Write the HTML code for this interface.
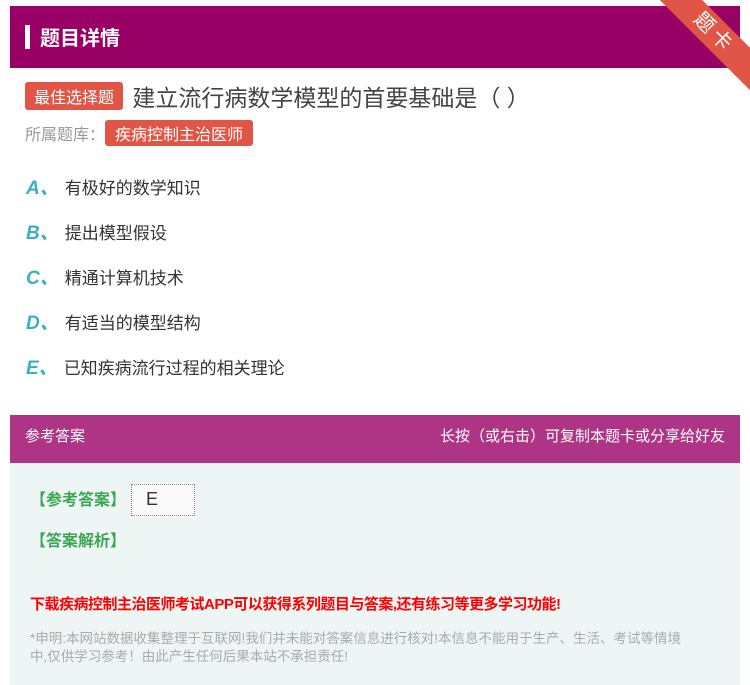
<!DOCTYPE html>
<html><head><meta charset="utf-8"><style>
*{margin:0;padding:0;box-sizing:border-box}
body{width:750px;height:685px;background:#fff;font-family:"Liberation Sans","Noto Sans CJK SC",sans-serif;position:relative;overflow:hidden}
.hd{position:absolute;left:10px;top:6px;width:730px;height:62px;background:#990066}
.hd .bar{position:absolute;left:15px;top:19px;width:5px;height:24px;background:#fff}
.hd .t{position:absolute;left:30px;top:16px;color:#fff;font-size:20px;font-weight:bold}
.rib{position:absolute;right:-34px;top:18px;width:140px;height:30px;background:#e05545;transform:rotate(45deg);color:#fff;font-size:20px;text-align:center;line-height:30px;letter-spacing:4px}
.tag{display:inline-block;background:#e05545;color:#fff;border-radius:3px}
.q{position:absolute;left:25px;top:79px;font-size:23px;color:#444}
.q .tag{font-size:16px;padding:2px 9px;vertical-align:3px;margin-right:3px}
.lib{position:absolute;left:25px;top:120px;font-size:16px;color:#999}
.lib .tag{font-size:16px;padding:1px 10px}
.opt{position:absolute;left:26px;font-size:17px;color:#333}
.opt b{color:#3ab0c0;font-style:italic;font-size:19px;margin-right:6px}
.ah{position:absolute;left:10px;top:415px;width:730px;height:48px;background:#ae3485;color:#fff;font-size:15px;line-height:44px}
.ab{position:absolute;left:10px;top:463px;width:730px;height:222px;background:#eef6f5}
.g{color:#3aa655;font-size:16px;font-weight:bold;position:absolute}
.red{position:absolute;left:30px;top:593px;color:#f00;font-size:15px;font-weight:bold;letter-spacing:-0.5px}
.dec{position:absolute;left:30px;top:630px;width:668px;color:#aaa;font-size:13.5px;line-height:18px}
</style></head><body>
<div class="hd"><div class="bar"></div><div class="t">题目详情</div></div>
<div class="rib">题卡</div>
<div class="q"><span class="tag">最佳选择题</span> 建立流行病数学模型的首要基础是（ ）</div>
<div class="lib">所属题库：<span class="tag">疾病控制主治医师</span></div>
<div class="opt" style="top:173px"><b>A、</b>有极好的数学知识</div>
<div class="opt" style="top:218px"><b>B、</b>提出模型假设</div>
<div class="opt" style="top:263px"><b>C、</b>精通计算机技术</div>
<div class="opt" style="top:308px"><b>D、</b>有适当的模型结构</div>
<div class="opt" style="top:353px"><b>E、</b>已知疾病流行过程的相关理论</div>
<div class="ah"><span style="position:absolute;left:15px">参考答案</span><span style="position:absolute;right:15px">长按（或右击）可复制本题卡或分享给好友</span></div>
<div class="ab"></div>
<div class="g" style="left:30px;top:486px">【参考答案】</div>
<div style="position:absolute;left:131px;top:484px;width:64px;height:32px;background:#fafafa;border:1px dotted #888;font-size:18px;padding-left:14px;line-height:28px;color:#333">E</div>
<div class="g" style="left:30px;top:527px">【答案解析】</div>
<div class="red">下载疾病控制主治医师考试APP可以获得系列题目与答案,还有练习等更多学习功能!</div>
<div class="dec">*申明:本网站数据收集整理于互联网!我们并未能对答案信息进行核对!本信息不能用于生产、生活、考试等情境中,仅供学习参考！由此产生任何后果本站不承担责任!</div>
</body></html>
